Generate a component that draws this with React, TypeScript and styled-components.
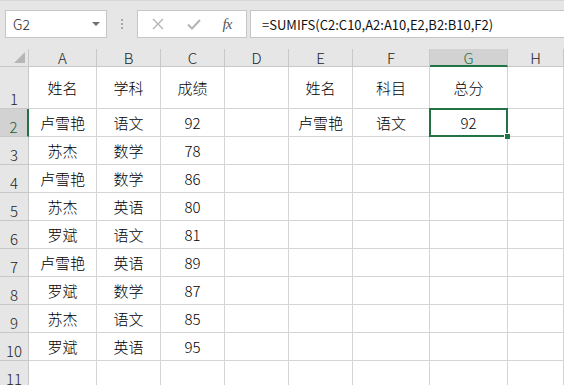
import { Fragment } from 'react';
import styled, { createGlobalStyle } from 'styled-components';

const GlobalStyle = createGlobalStyle`
  html, body {
    margin: 0;
    padding: 0;
    background: #ffffff;
    overflow: hidden;
  }
  * {
    box-sizing: border-box;
  }
`;

const FONT = `'Noto Sans CJK SC', 'Noto Sans', sans-serif`;
const GREEN = '#217346';
const GRID = '#d4d4d4';

const columns = ['A', 'B', 'C', 'D', 'E', 'F', 'G', 'H'];

const rows: string[][] = [
  ['姓名', '学科', '成绩', '', '姓名', '科目', '总分', ''],
  ['卢雪艳', '语文', '92', '', '卢雪艳', '语文', '92', ''],
  ['苏杰', '数学', '78', '', '', '', '', ''],
  ['卢雪艳', '数学', '86', '', '', '', '', ''],
  ['苏杰', '英语', '80', '', '', '', '', ''],
  ['罗斌', '语文', '81', '', '', '', '', ''],
  ['卢雪艳', '英语', '89', '', '', '', '', ''],
  ['罗斌', '数学', '87', '', '', '', '', ''],
  ['苏杰', '语文', '85', '', '', '', '', ''],
  ['罗斌', '英语', '95', '', '', '', '', ''],
  ['', '', '', '', '', '', '', ''],
];

const Page = styled.div`
  width: 100vw;
  height: 100vh;
  overflow: hidden;
  display: flex;
  flex-direction: column;
  font-family: ${FONT};
  font-weight: 300;
  color: #000;
`;

const Toolbar = styled.div`
  height: 49px;
  flex: none;
  background: #e6e6e6;
  border-top: 1px solid #d6d6d6;
  display: flex;
  align-items: center;
  padding-left: 5px;
  padding-bottom: 2px;
`;

const NameBox = styled.div`
  width: 102px;
  height: 28px;
  background: #fff;
  border: 1px solid #c6c6c6;
  display: flex;
  align-items: center;
  justify-content: space-between;
  padding: 0 6px 0 7px;
  font-size: 14px;
  color: #222;
`;

const DropArrow = styled.span`
  width: 0;
  height: 0;
  border-left: 4px solid transparent;
  border-right: 4px solid transparent;
  border-top: 4px solid #707070;
`;

const Dots = styled.div`
  width: 30px;
  display: flex;
  flex-direction: column;
  align-items: center;
  gap: 2px;

  span {
    width: 2px;
    height: 2px;
    background: #a8a8a8;
  }
`;

const ButtonBox = styled.div`
  width: 110px;
  height: 28px;
  background: #fff;
  border: 1px solid #c6c6c6;
  display: flex;
  align-items: center;
  justify-content: space-around;
  padding: 0 4px 0 2px;
`;

const FxLabel = styled.span`
  font-family: 'Liberation Serif', serif;
  font-style: italic;
  font-size: 15px;
  color: #555;
  letter-spacing: -1px;
`;

const FormulaInput = styled.div`
  flex: 1;
  height: 28px;
  margin-left: 3px;
  background: #fff;
  border: 1px solid #c6c6c6;
  border-right: none;
  display: flex;
  align-items: center;
  padding-left: 11px;
  font-size: 13px;
  font-weight: 400;
  color: #111;
  white-space: nowrap;
`;

const Sheet = styled.div`
  display: grid;
  grid-template-columns: 29px 68px 64px 64px 64px 64px 77px 78px 1fr;
  grid-template-rows: 18px 42px repeat(9, 28px) 28px;
`;

const Corner = styled.div`
  background: #e6e6e6;
  border-right: 1px solid #c8c8c8;
  border-bottom: 1px solid #c8c8c8;
  position: relative;

  &::after {
    content: '';
    position: absolute;
    right: 3px;
    bottom: 3px;
    width: 0;
    height: 0;
    border-left: 11px solid transparent;
    border-bottom: 11px solid #b6b6b6;
  }
`;

const ColHeader = styled.div<{ $selected?: boolean }>`
  background: ${(p) => (p.$selected ? '#d2d2d2' : '#e6e6e6')};
  border-right: 1px solid #c8c8c8;
  border-bottom: ${(p) => (p.$selected ? `2px solid ${GREEN}` : '1px solid #c8c8c8')};
  display: flex;
  align-items: center;
  justify-content: center;
  font-size: 15px;
  line-height: 1;
  padding-top: ${(p) => (p.$selected ? '1px' : '0')};
  color: ${(p) => (p.$selected ? GREEN : '#222')};
`;

const RowHeader = styled.div<{ $selected?: boolean }>`
  background: ${(p) => (p.$selected ? '#d2d2d2' : '#e6e6e6')};
  border-right: ${(p) => (p.$selected ? `2px solid ${GREEN}` : '1px solid #c8c8c8')};
  border-bottom: 1px solid #c8c8c8;
  display: flex;
  align-items: flex-end;
  justify-content: center;
  font-size: 15px;
  line-height: 18px;
  padding-bottom: 0;
  color: ${(p) => (p.$selected ? '#1a5c38' : '#222')};
`;

const Cell = styled.div<{ $active?: boolean }>`
  position: relative;
  background: #fff;
  border-right: 1px solid ${GRID};
  border-bottom: 1px solid ${GRID};
  display: flex;
  align-items: center;
  justify-content: center;
  font-size: 15px;
  white-space: nowrap;

  ${(p) =>
    p.$active &&
    `
    &::after {
      content: '';
      position: absolute;
      left: -1px;
      top: -1px;
      right: -1px;
      bottom: -1px;
      border: 2px solid ${GREEN};
    }
    &::before {
      content: '';
      position: absolute;
      right: -3px;
      bottom: -3px;
      width: 5px;
      height: 5px;
      background: ${GREEN};
      border-left: 1px solid #fff;
      border-top: 1px solid #fff;
      z-index: 2;
    }
  `}
`;

const activeCol = 6;
const activeRow = 1;

export default function App() {
  return (
    <Page>
      <GlobalStyle />
      <Toolbar>
        <NameBox>
          <span>G2</span>
          <DropArrow />
        </NameBox>
        <Dots>
          <span />
          <span />
          <span />
        </Dots>
        <ButtonBox>
          <svg width="14" height="14" viewBox="0 0 14 14">
            <path d="M2 2 L12 12 M12 2 L2 12" stroke="#b4b4b4" strokeWidth="1.4" fill="none" />
          </svg>
          <svg width="16" height="14" viewBox="0 0 16 14">
            <path d="M2 7.5 L6 11.5 L14 3" stroke="#b4b4b4" strokeWidth="2" fill="none" />
          </svg>
          <FxLabel>fx</FxLabel>
        </ButtonBox>
        <FormulaInput>=SUMIFS(C2:C10,A2:A10,E2,B2:B10,F2)</FormulaInput>
      </Toolbar>
      <Sheet>
        <Corner />
        {columns.map((c, i) => (
          <ColHeader key={c} $selected={i === activeCol}>
            {c}
          </ColHeader>
        ))}
        {rows.map((r, ri) => (
          <Fragment key={ri}>
            <RowHeader $selected={ri === activeRow}>{ri + 1}</RowHeader>
            {r.map((v, ci) => (
              <Cell key={ci} $active={ri === activeRow && ci === activeCol}>
                {v}
              </Cell>
            ))}
          </Fragment>
        ))}
      </Sheet>
    </Page>
  );
}
